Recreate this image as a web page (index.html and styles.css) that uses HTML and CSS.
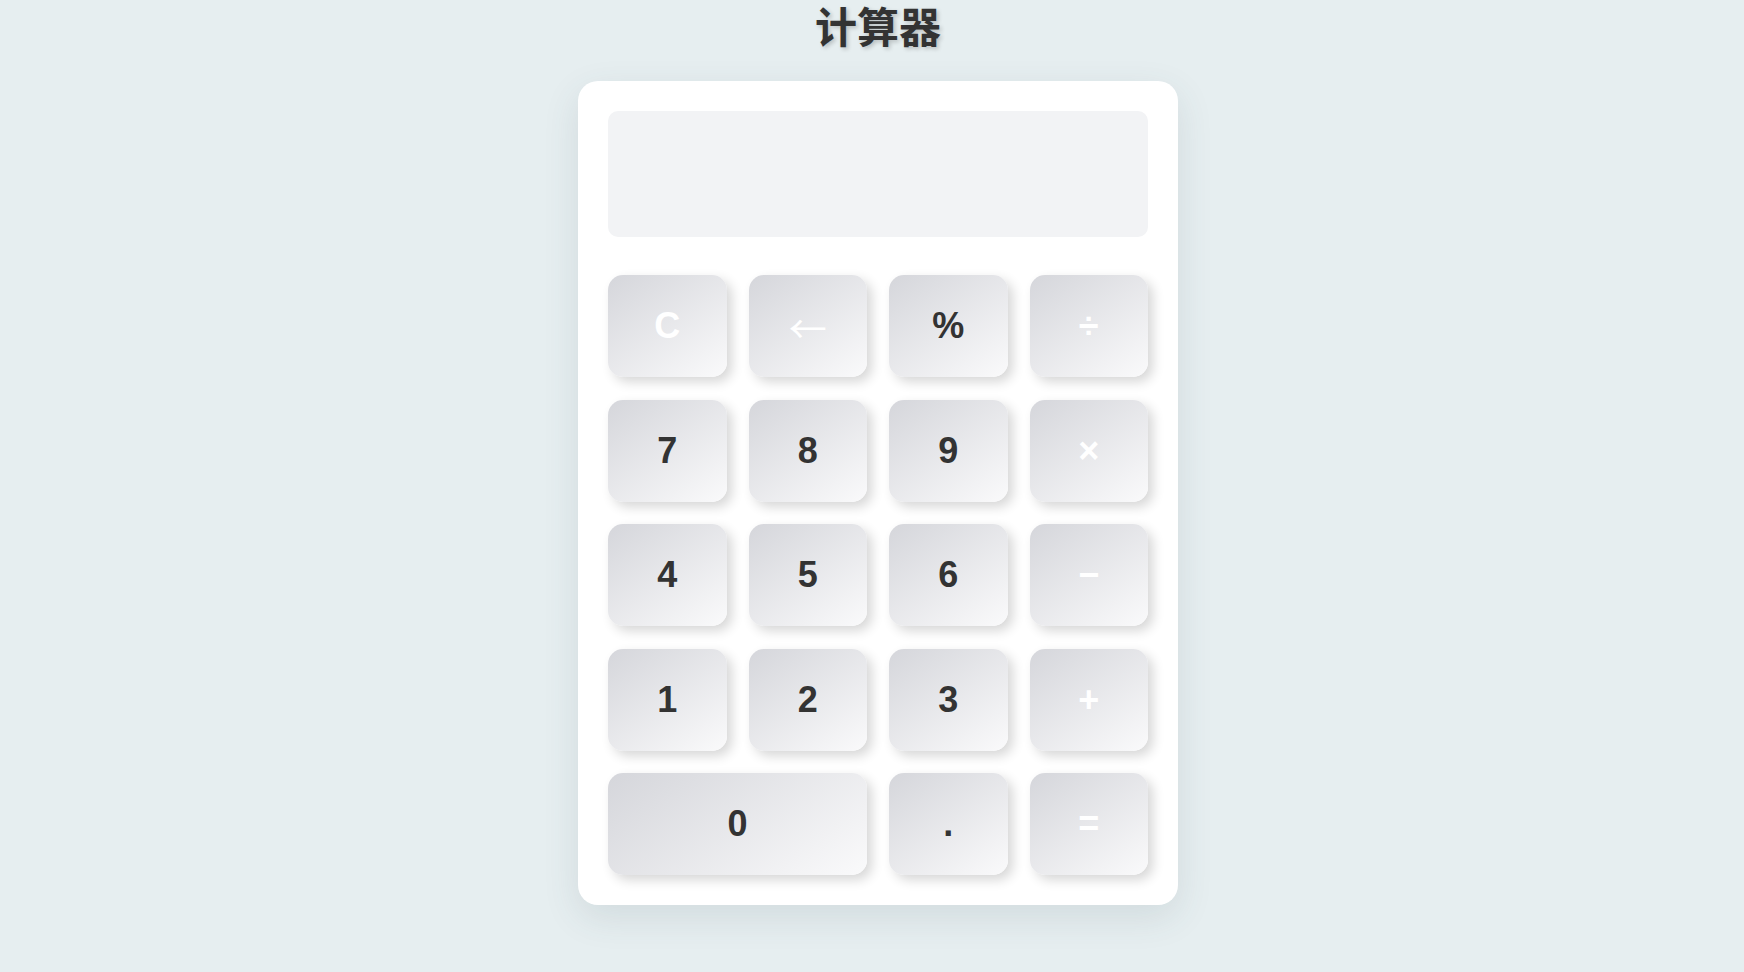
FILE: index.html
```html
<!DOCTYPE html>
<html lang="zh-CN">
<head>
    <meta charset="UTF-8"/>
    <meta name="viewport" content="width=device-width, initial-scale=1.0"/>
    <title>计算器</title>
    <link rel="stylesheet" href="styles.css">
</head>
<body>
<div class="page">
    <h1 class="title">计算器</h1>
    <div class="calculator">
        <div class="display" id="display"></div>
        <div class="keys">
            <button class="key op">C</button>
            <button class="key op arrow">&larr;</button>
            <button class="key">%</button>
            <button class="key op">&divide;</button>

            <button class="key">7</button>
            <button class="key">8</button>
            <button class="key">9</button>
            <button class="key op">&times;</button>

            <button class="key">4</button>
            <button class="key">5</button>
            <button class="key">6</button>
            <button class="key op">&minus;</button>

            <button class="key">1</button>
            <button class="key">2</button>
            <button class="key">3</button>
            <button class="key op">+</button>

            <button class="key zero">0</button>
            <button class="key">.</button>
            <button class="key op">=</button>
        </div>
    </div>
</div>
</body>
</html>
```

FILE: styles.css
```css
html, body {
    margin: 0;
    padding: 0;
}

body {
    background: #e6eef0;
    font-family: "Liberation Sans", Arial, sans-serif;
    height: 972px;
    overflow: hidden;
}

.page {
    display: flex;
    flex-direction: column;
    align-items: center;
    padding-left: 12px;
}

.title {
    margin: 0 0 31px;
    font-family: "Noto Sans CJK SC", sans-serif;
    font-size: 42px;
    line-height: 50px;
    font-weight: 700;
    color: #333;
    text-shadow: 2px 2px 4px rgba(0, 0, 0, 0.2);
}

.calculator {
    width: 600px;
    box-sizing: border-box;
    padding: 30px;
    background: #fff;
    border-radius: 20px;
    box-shadow: 0 12px 36px rgba(60, 80, 90, 0.12);
}

.display {
    height: 126px;
    background: #f2f3f5;
    border-radius: 10px;
    margin-bottom: 38px;
}

.keys {
    display: grid;
    grid-template-columns: repeat(4, 1fr);
    grid-auto-rows: 102px;
    column-gap: 22px;
    row-gap: 22.5px;
}

.key {
    border: none;
    border-radius: 15px;
    background: linear-gradient(145deg, #d5d6db, #fafafb);
    box-shadow: 5px 5px 12px rgba(0, 0, 0, 0.16);
    font-family: "Liberation Sans", Arial, sans-serif;
    font-size: 36px;
    font-weight: 700;
    color: #333;
    cursor: pointer;
    padding: 0;
}

.key.op {
    color: #fff;
}

.key.arrow {
    font-family: "Noto Sans CJK SC", sans-serif;
    font-size: 38px;
    font-weight: 400;
}

.key.zero {
    grid-column: span 2;
}
```
